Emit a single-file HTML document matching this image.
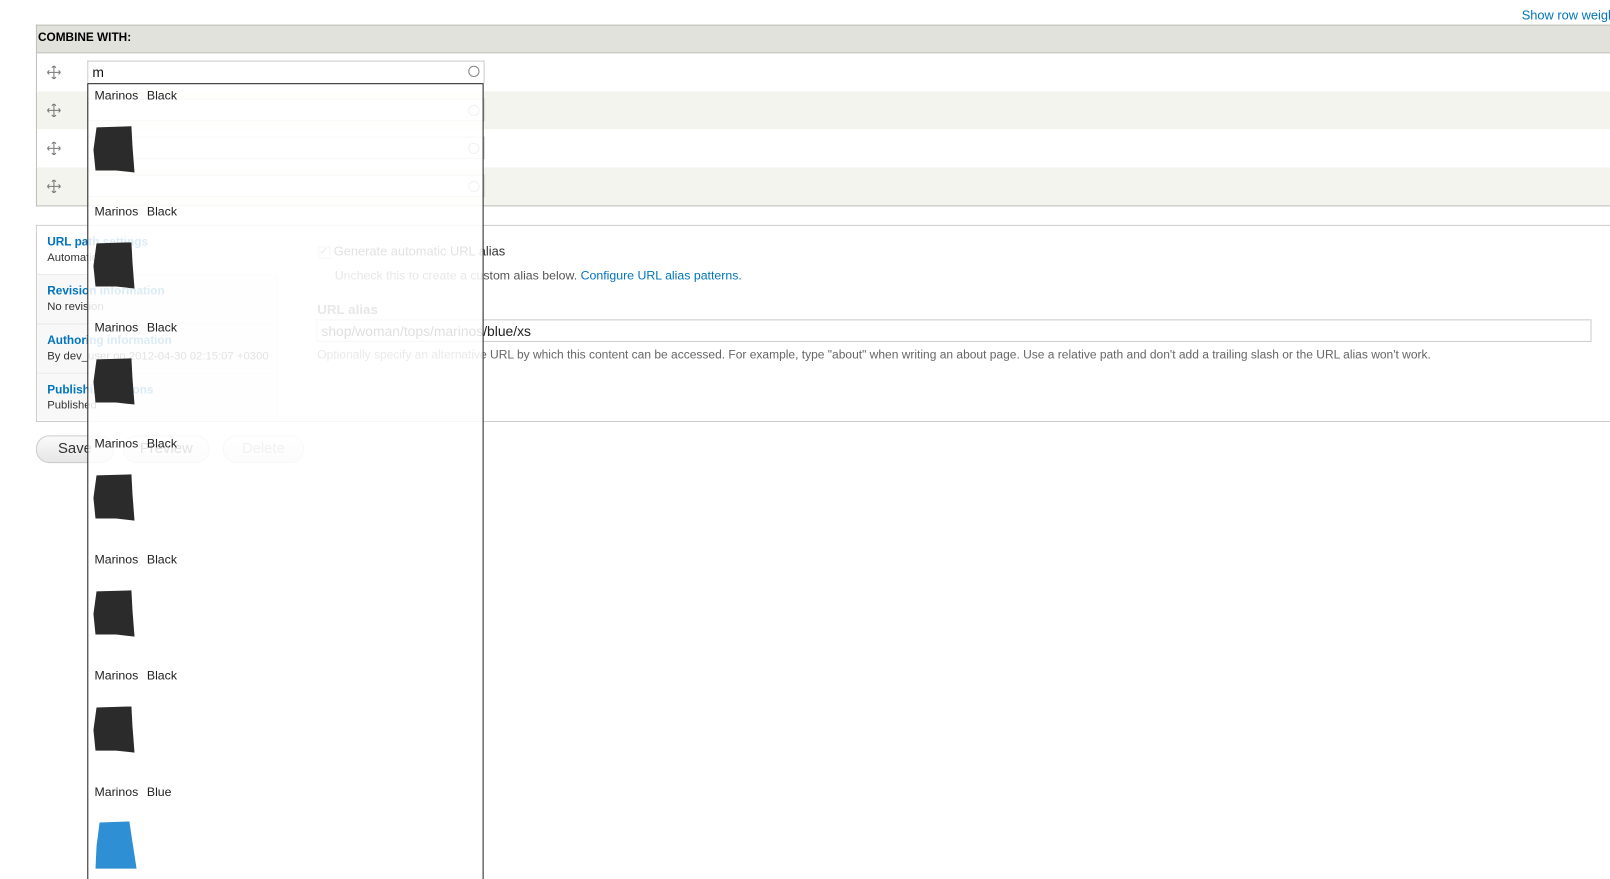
<!DOCTYPE html>
<html><head><style>
body{margin:0;width:1610px;height:878px;overflow:hidden;background:#fff;font-family:"Liberation Sans",sans-serif;font-size:12px;color:#333;position:relative}
#w{position:absolute;left:0;top:0;width:1568px;height:856px;transform:scale(1.0268);transform-origin:0 0;overflow:hidden}
.a{position:absolute}
a{color:#0074bd;text-decoration:none}
.row{position:absolute;left:35px;width:1575px;height:37px;border-left:1px solid #bebfb9}
.circ{position:absolute;width:9px;height:9px;border:1px solid #999;border-radius:50%}
.tab{position:absolute;left:36px;width:234px;border-bottom:1px solid #e8e8e8;background:#f8f8f8}
.tab a{position:absolute;left:10px;top:10px;font-weight:bold;font-size:11.5px}
.tab span{position:absolute;left:10px;top:25px;font-size:11px;color:#333}
.btn{position:absolute;top:424px;height:25px;border:1px solid #ccc;border-radius:13px;background:linear-gradient(#fafafa,#e6e6e6);font-size:14.5px;color:#333;text-align:center;line-height:25px}
.item{position:absolute;left:0;width:385px;height:113px}
.item .t{position:absolute;left:6px;top:4px;font-size:12px;color:#222;word-spacing:5px}
.item svg{position:absolute;left:5px;top:40px}
</style></head><body><div id="w">
<a class="a" href="#" style="left:1482px;top:8px;font-size:12.5px;white-space:nowrap">Show row weights</a>
<div class="a" style="left:35px;top:24px;width:1575px;height:26px;background:#e1e2dc;border:1px solid #bebfb9;border-right:none"></div>
<div class="a" style="left:37px;top:31px;font-weight:bold;font-size:11.5px;color:#000">COMBINE WITH:</div>
<div class="row" style="top:52px;background:#fff"></div>
<div class="row" style="top:89px;background:#f3f4ee"></div>
<div class="row" style="top:126px;background:#fff"></div>
<div class="row" style="top:163px;background:#f3f4ee;border-bottom:1px solid #bebfb9"></div>
<svg class="a" style="left:46px;top:64px" width="13" height="13" viewBox="0 0 13 13"><path d="M6.5 0v13M0 6.5h13M4.5 2l2-2 2 2M4.5 11l2 2 2-2M2 4.5l-2 2 2 2M11 4.5l2 2-2 2" stroke="#777" fill="none"/></svg>
<svg class="a" style="left:46px;top:101px" width="13" height="13" viewBox="0 0 13 13"><path d="M6.5 0v13M0 6.5h13M4.5 2l2-2 2 2M4.5 11l2 2 2-2M2 4.5l-2 2 2 2M11 4.5l2 2-2 2" stroke="#777" fill="none"/></svg>
<svg class="a" style="left:46px;top:138px" width="13" height="13" viewBox="0 0 13 13"><path d="M6.5 0v13M0 6.5h13M4.5 2l2-2 2 2M4.5 11l2 2 2-2M2 4.5l-2 2 2 2M11 4.5l2 2-2 2" stroke="#777" fill="none"/></svg>
<svg class="a" style="left:46px;top:175px" width="13" height="13" viewBox="0 0 13 13"><path d="M6.5 0v13M0 6.5h13M4.5 2l2-2 2 2M4.5 11l2 2 2-2M2 4.5l-2 2 2 2M11 4.5l2 2-2 2" stroke="#777" fill="none"/></svg>
<div class="a" style="left:85px;top:96px;width:385px;height:20px;border:1px solid #ccc;background:#fff"></div>
<div class="a" style="left:85px;top:133px;width:385px;height:20px;border:1px solid #ccc;background:#fff"></div>
<div class="a" style="left:85px;top:170px;width:385px;height:20px;border:1px solid #ccc;background:#fff"></div>
<div class="circ" style="left:456px;top:102px"></div><div class="circ" style="left:456px;top:139px"></div><div class="circ" style="left:456px;top:176px"></div>

<div class="a" style="left:35px;top:219px;width:1575px;height:190px;border:1px solid #ccc;border-right:none"></div>
<div class="tab" style="top:220px;height:47px;background:#fff"><a href="#">URL path settings</a><span>Automatic alias</span></div>
<div class="tab" style="top:268px;height:47px"><a href="#">Revision information</a><span>No revision</span></div>
<div class="tab" style="top:316px;height:47px"><a href="#">Authoring information</a><span>By dev_user on 2012-04-30 02:15:07 +0300</span></div>
<div class="tab" style="top:364px;height:45px;border-bottom:none"><a href="#">Publishing options</a><span>Published</span></div>
<div class="a" style="left:270px;top:268px;width:1px;height:141px;background:#e8e8e8"></div>
<div class="a" style="left:310px;top:240px;width:10px;height:10px;border:1px solid #bbb;background:#fff;font-size:10px;line-height:10px;color:#666">✓</div>
<div class="a" style="left:325px;top:238px;font-size:12.5px">Generate automatic URL alias</div>
<div class="a" style="left:326px;top:261px;font-size:12px;color:#555">Uncheck this to create a custom alias below. <a href="#">Configure URL alias patterns.</a></div>
<div class="a" style="left:309px;top:294px;font-weight:bold;font-size:13px;color:#555">URL alias</div>
<div class="a" style="left:308px;top:311px;width:1240px;height:20px;border:1px solid #ccc;background:#fff;font-size:13.5px;line-height:21px;text-indent:4px;color:#222">shop/woman/tops/marinos/blue/xs</div>
<div class="a" style="left:309px;top:339px;font-size:11.7px;color:#666;white-space:nowrap">Optionally specify an alternative URL by which this content can be accessed. For example, type "about" when writing an about page. Use a relative path and don't add a trailing slash or the URL alias won't work.</div>
<div class="btn" style="left:35px;width:74px">Save</div>
<div class="btn" style="left:120px;width:82px">Preview</div>
<div class="btn" style="left:217px;width:77px;color:#999">Delete</div>

<div class="a" style="left:85px;top:59px;width:385px;height:21px;border:1px solid #ccc;border-bottom:none;background:#fff;font-size:13.5px;line-height:22px;text-indent:4px;color:#111">m</div>
<div class="circ" style="left:456px;top:64px;border-color:#888"></div>
<div class="a" style="left:85px;top:81px;width:384px;height:800px;border:1px solid #222;background:rgba(255,255,255,0.86)">
<div class="item" style="top:0"><div class="t">Marinos Black</div><svg width="42" height="48"><path d="M3 2L37 1 38 20 40 46 22 44 2 44 0 24Z" fill="#2b2b2b"/></svg></div>
<div class="item" style="top:113px"><div class="t">Marinos Black</div><svg width="42" height="48"><path d="M3 2L37 1 38 20 40 46 22 44 2 44 0 24Z" fill="#2b2b2b"/></svg></div>
<div class="item" style="top:226px"><div class="t">Marinos Black</div><svg width="42" height="48"><path d="M3 2L37 1 38 20 40 46 22 44 2 44 0 24Z" fill="#2b2b2b"/></svg></div>
<div class="item" style="top:339px"><div class="t">Marinos Black</div><svg width="42" height="48"><path d="M3 2L37 1 38 20 40 46 22 44 2 44 0 24Z" fill="#2b2b2b"/></svg></div>
<div class="item" style="top:452px"><div class="t">Marinos Black</div><svg width="42" height="48"><path d="M3 2L37 1 38 20 40 46 22 44 2 44 0 24Z" fill="#2b2b2b"/></svg></div>
<div class="item" style="top:565px"><div class="t">Marinos Black</div><svg width="42" height="48"><path d="M3 2L37 1 38 20 40 46 22 44 2 44 0 24Z" fill="#2b2b2b"/></svg></div>
<div class="item" style="top:678px"><div class="t">Marinos Blue</div><svg width="42" height="48"><path d="M6 1L35 0 38 20 42 46 22 46 2 46 3 24Z" fill="#2e8fd4"/></svg></div>
</div>
</div></body></html>
